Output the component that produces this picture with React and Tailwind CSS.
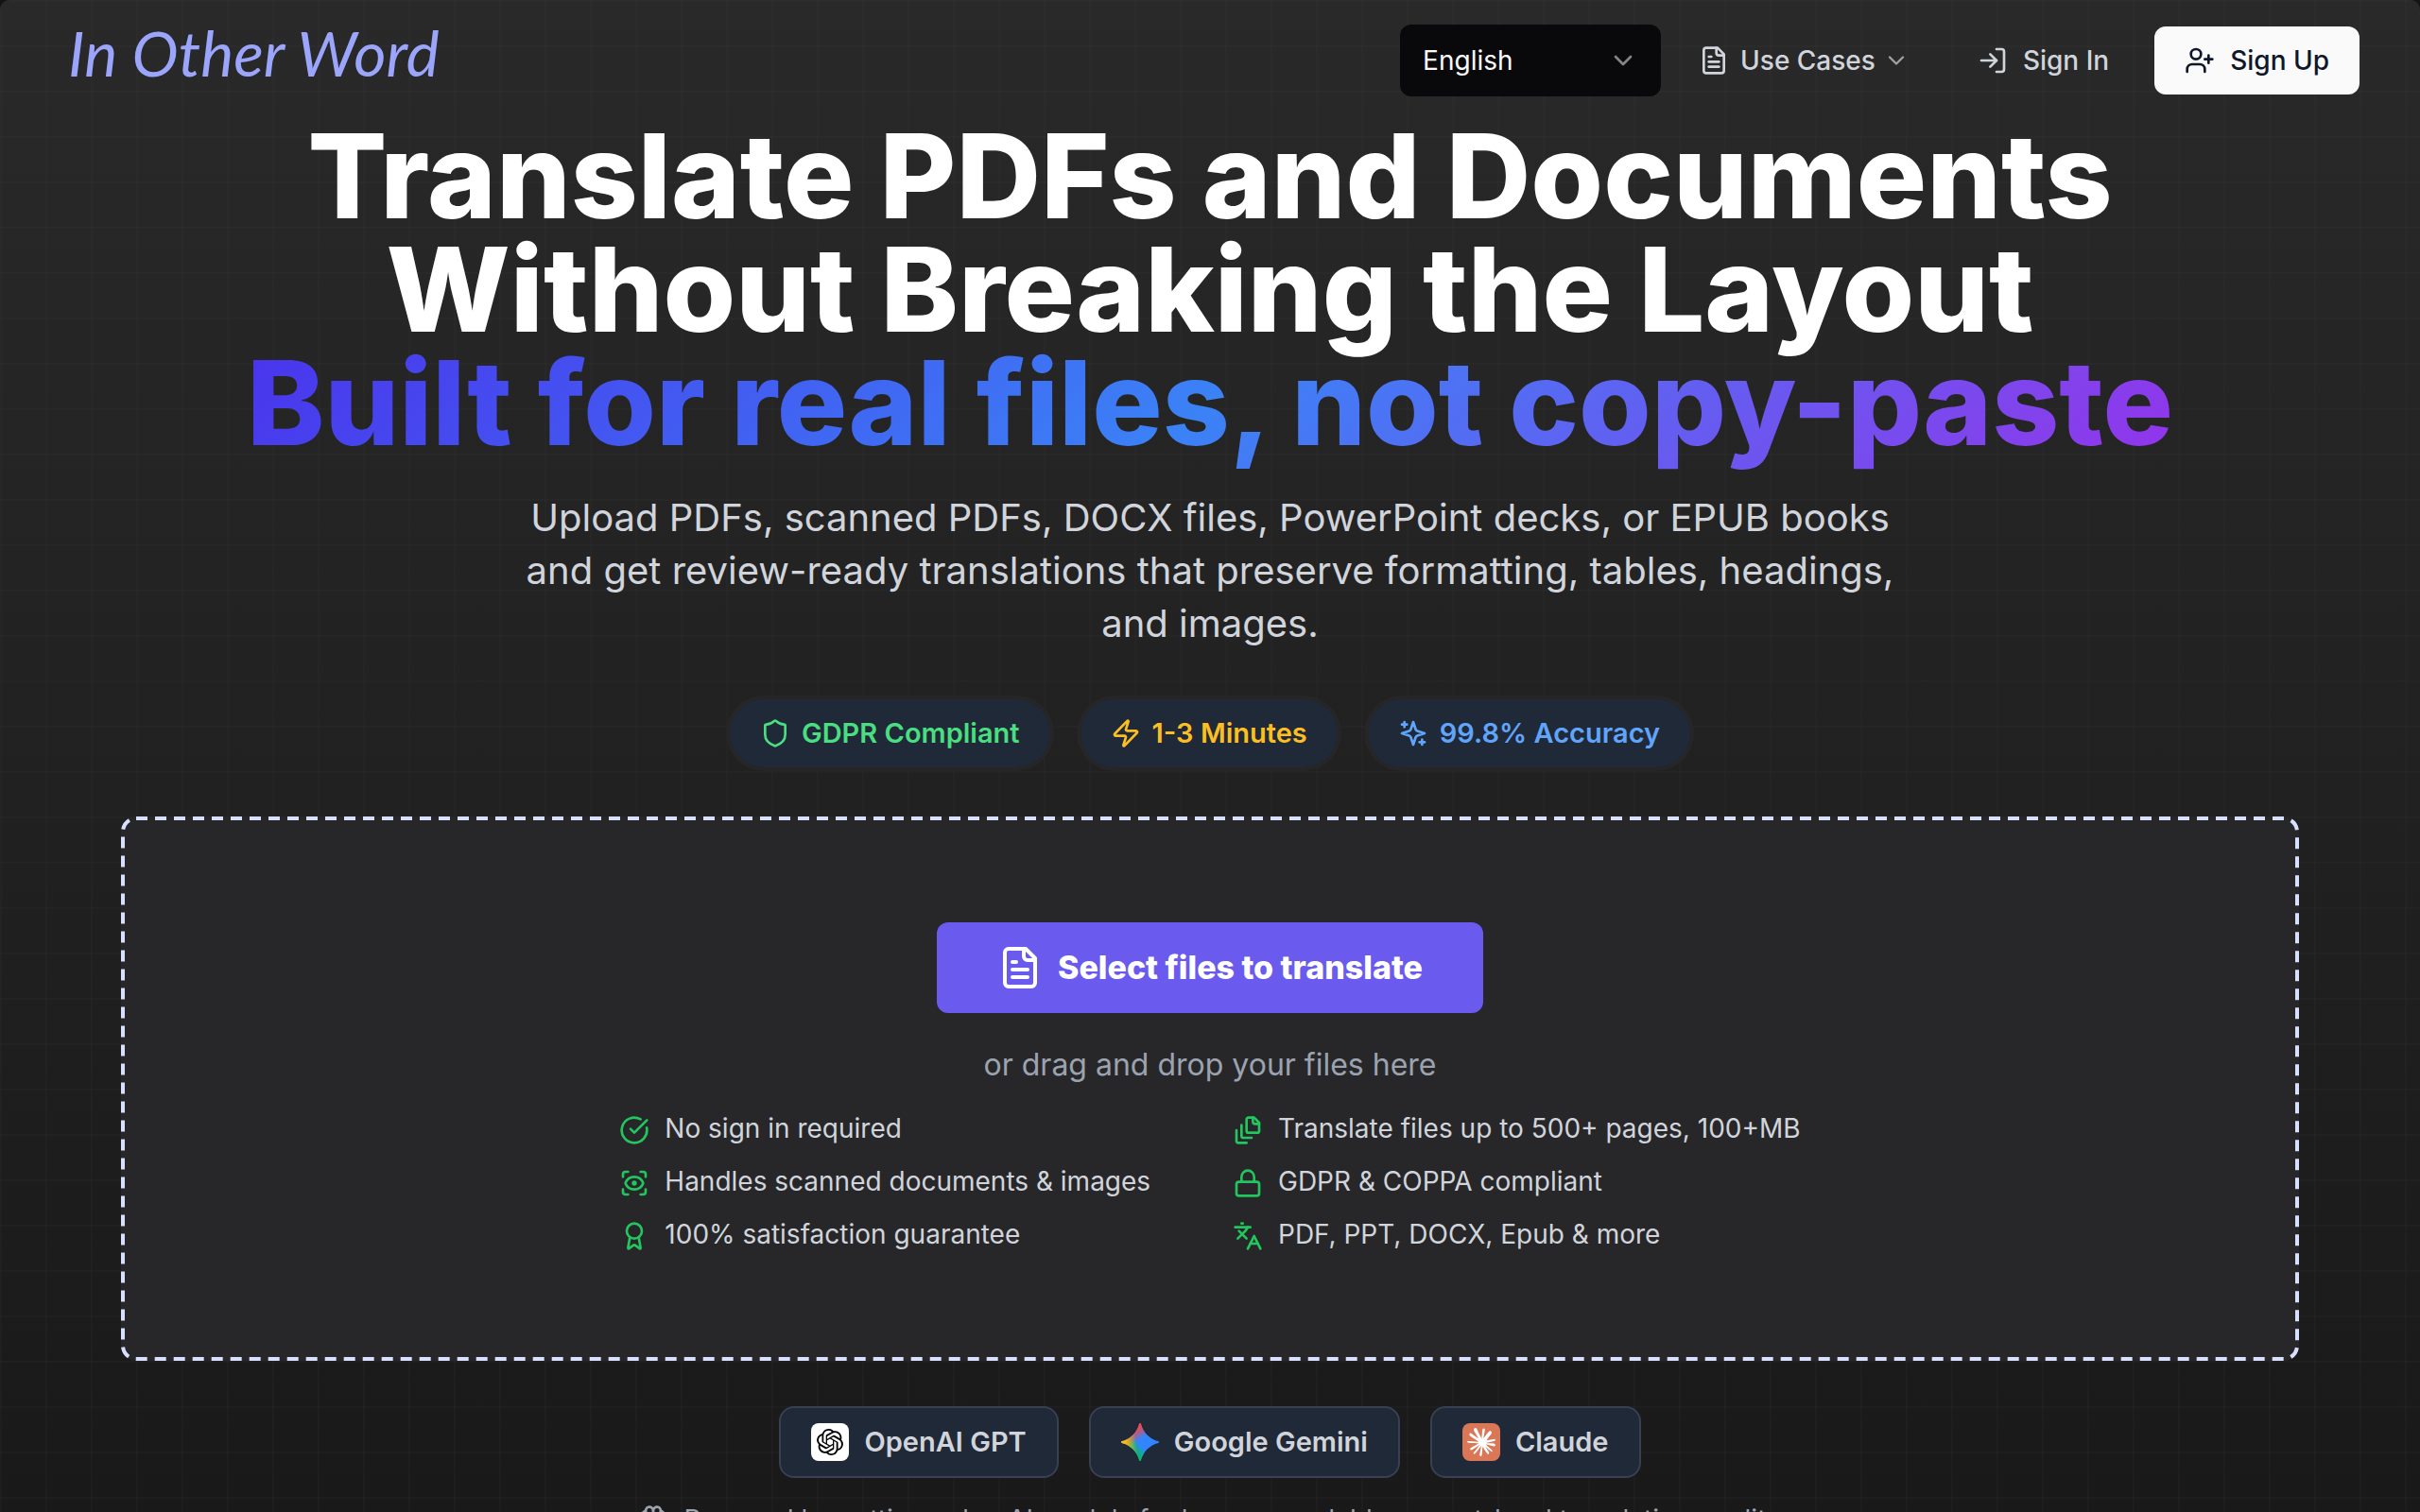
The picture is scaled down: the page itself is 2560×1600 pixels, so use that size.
import { useState } from 'react';
import {
  Award,
  Brain,
  ChevronDown,
  CircleCheckBig,
  Languages,
  Lock,
  LogIn,
  ScanEye,
  Shield,
  UserPlus,
  Zap,
} from 'lucide-react';
import { SiClaude, SiOpenai } from 'react-icons/si';

function StrokeIcon({ className, children }) {
  return (
    <svg
      className={className}
      viewBox="0 0 24 24"
      fill="none"
      stroke="currentColor"
      strokeWidth="2"
      strokeLinecap="round"
      strokeLinejoin="round"
      aria-hidden="true"
    >
      {children}
    </svg>
  );
}

function SparklesIcon({ className }) {
  return (
    <StrokeIcon className={className}>
      <path d="m12 3-1.912 5.813a2 2 0 0 1-1.275 1.275L3 12l5.813 1.912a2 2 0 0 1 1.275 1.275L12 21l1.912-5.813a2 2 0 0 1 1.275-1.275L21 12l-5.813-1.912a2 2 0 0 1-1.275-1.275L12 3Z" />
      <path d="M5 3v4" />
      <path d="M19 17v4" />
      <path d="M3 5h4" />
      <path d="M17 19h4" />
    </StrokeIcon>
  );
}

function DocumentIcon({ className }) {
  return (
    <StrokeIcon className={className}>
      <path d="M15 2H6a2 2 0 0 0-2 2v16a2 2 0 0 0 2 2h12a2 2 0 0 0 2-2V7Z" />
      <path d="M14 2v4a2 2 0 0 0 2 2h4" />
      <path d="M10 9H8" />
      <path d="M16 13H8" />
      <path d="M16 17H8" />
    </StrokeIcon>
  );
}

function PagesIcon({ className }) {
  return (
    <StrokeIcon className={className}>
      <path d="M21 7h-3a2 2 0 0 1-2-2V2" />
      <path d="M21 6v6.5c0 .8-.7 1.5-1.5 1.5h-7c-.8 0-1.5-.7-1.5-1.5v-9c0-.8.7-1.5 1.5-1.5H17Z" />
      <path d="M7 8v8.8c0 .3.2.6.4.8.2.2.5.4.8.4H15" />
      <path d="M3 12v8.8c0 .3.2.6.4.8.2.2.5.4.8.4H11" />
    </StrokeIcon>
  );
}

const GEMINI_STAR =
  'M20.616 10.835a14.147 14.147 0 01-4.45-3.001 14.111 14.111 0 01-3.678-6.452.503.503 0 00-.975 0 14.134 14.134 0 01-3.679 6.452 14.155 14.155 0 01-4.45 3.001c-.65.28-1.318.505-2.002.678a.502.502 0 000 .975c.684.172 1.35.397 2.002.677a14.147 14.147 0 014.45 3.001 14.112 14.112 0 013.679 6.453.502.502 0 00.975 0c.172-.685.397-1.351.677-2.003a14.145 14.145 0 013.001-4.45 14.113 14.113 0 016.453-3.678.503.503 0 000-.975 13.245 13.245 0 01-2.003-.678z';

function GeminiLogo() {
  return (
    <svg className="size-10" viewBox="1 1 22 22" aria-hidden="true">
      <defs>
        <linearGradient id="gemini-green" gradientUnits="userSpaceOnUse" x1="7" x2="11" y1="15.5" y2="12">
          <stop stopColor="#08B962" />
          <stop offset="1" stopColor="#08B962" stopOpacity="0" />
        </linearGradient>
        <linearGradient id="gemini-red" gradientUnits="userSpaceOnUse" x1="8" x2="11.5" y1="5.5" y2="11">
          <stop stopColor="#F94543" />
          <stop offset="1" stopColor="#F94543" stopOpacity="0" />
        </linearGradient>
        <linearGradient id="gemini-yellow" gradientUnits="userSpaceOnUse" x1="3.5" x2="17.5" y1="13.5" y2="12">
          <stop stopColor="#FABC12" />
          <stop offset=".46" stopColor="#FABC12" stopOpacity="0" />
        </linearGradient>
      </defs>
      <path d={GEMINI_STAR} fill="#3186FF" />
      <path d={GEMINI_STAR} fill="url(#gemini-green)" />
      <path d={GEMINI_STAR} fill="url(#gemini-red)" />
      <path d={GEMINI_STAR} fill="url(#gemini-yellow)" />
    </svg>
  );
}

function OpenAILogo() {
  return (
    <span className="flex size-10 items-center justify-center rounded-lg bg-white text-black">
      <SiOpenai className="size-7" />
    </span>
  );
}

function ClaudeLogo() {
  return (
    <span className="flex size-10 items-center justify-center rounded-lg bg-[#d97757] text-white">
      <SiClaude className="size-[30px]" />
    </span>
  );
}

const badges = [
  { label: 'GDPR Compliant', icon: Shield, color: 'text-[#4ade80]' },
  { label: '1-3 Minutes', icon: Zap, color: 'text-[#fbbf24]' },
  { label: '99.8% Accuracy', icon: SparklesIcon, color: 'text-[#60a5fa]' },
];

const features = [
  { label: 'No sign in required', icon: CircleCheckBig },
  { label: 'Translate files up to 500+ pages, 100+MB', icon: PagesIcon },
  { label: 'Handles scanned documents & images', icon: ScanEye },
  { label: 'GDPR & COPPA compliant', icon: Lock },
  { label: '100% satisfaction guarantee', icon: Award },
  { label: 'PDF, PPT, DOCX, Epub & more', icon: Languages },
];

const models = [
  { label: 'OpenAI GPT', logo: OpenAILogo },
  { label: 'Google Gemini', logo: GeminiLogo },
  { label: 'Claude', logo: ClaudeLogo },
];

function Header() {
  const [language, setLanguage] = useState('en');

  return (
    <header className="flex items-start justify-between px-16 pt-[26px] pb-6">
      <a href="#" className="pl-2 font-['Lato'] text-[66px] leading-[60px] text-[#9aa5fb] italic">
        In Other Word
      </a>

      <nav className="flex items-center gap-4 text-[28px] leading-10 font-medium text-[#d1d5db]">
        <div className="relative">
          <select
            aria-label="Language"
            value={language}
            onChange={(e) => setLanguage(e.target.value)}
            className="h-[76px] w-[276px] appearance-none rounded-xl bg-[#09090b] px-6 font-normal text-[#fafafa]"
          >
            <option value="en">English</option>
            <option value="es">Español</option>
            <option value="fr">Français</option>
          </select>
          <ChevronDown className="pointer-events-none absolute top-[22px] right-6 size-8 text-white opacity-50" />
        </div>

        <button type="button" className="flex h-[72px] items-center gap-3 px-6">
          <DocumentIcon className="size-8" />
          <span>Use Cases</span>
          <ChevronDown className="-ml-1 size-7 opacity-70" />
        </button>

        <a href="#" className="flex h-[72px] items-center gap-4 px-8">
          <LogIn className="size-8" />
          Sign In
        </a>

        <a href="#" className="flex h-[72px] items-center gap-4 rounded-xl bg-[#fafafa] px-8 text-[#0f172a]">
          <UserPlus className="size-8" />
          Sign Up
        </a>
      </nav>
    </header>
  );
}

function DropZone() {
  return (
    <section className="relative mt-12 flex w-full flex-col items-center rounded-2xl bg-[#27272a] pt-28 pb-[114px]">
      <svg className="pointer-events-none absolute inset-0 h-full w-full" fill="none" aria-hidden="true">
        <rect
          x="2"
          y="2"
          rx="14"
          className="h-[calc(100%-4px)] w-[calc(100%-4px)]"
          stroke="#d9dffe"
          strokeWidth="4"
          strokeDasharray="12 8"
        />
      </svg>

      <button
        type="button"
        className="flex h-24 items-center gap-4 rounded-xl bg-[#6a5aed] px-16 text-[34px] leading-10 font-extrabold text-white"
      >
        <DocumentIcon className="size-12" />
        Select files to translate
      </button>

      <p className="mt-8 text-[32px] leading-[46px] text-[#9ca3af]">or drag and drop your files here</p>

      <ul className="mt-6 grid grid-cols-2 gap-x-12 gap-y-4">
        {features.map(({ label, icon: Icon }) => (
          <li key={label} className="flex items-start gap-4 text-[28px] leading-10 text-[#d1d5db]">
            <Icon className="mt-1.5 size-8 shrink-0 text-[#22c55e]" />
            {label}
          </li>
        ))}
      </ul>
    </section>
  );
}

function App() {
  return (
    <div className="h-screen overflow-hidden bg-[#141414] font-['Inter',sans-serif]">
      <div className="min-h-screen rounded-t-[10px] bg-[linear-gradient(to_right,rgba(255,255,255,0.014)_2px,transparent_2px),linear-gradient(to_bottom,rgba(255,255,255,0.014)_2px,transparent_2px),linear-gradient(to_bottom,#292929,#191919)] bg-[size:48px_48px,48px_48px,100%_100%]">
        <Header />

        <main className="flex flex-col items-center px-32">
          <h1 className="text-center text-[124px] leading-[120px] font-extrabold text-white">
            Translate PDFs and Documents
            <br />
            Without Breaking the Layout
            <br />
            <span className="bg-[linear-gradient(135deg,#4a33ec,#3b82f6,#9333ea)] bg-clip-text text-transparent">
              Built for real files, not copy-paste
            </span>
          </h1>

          <p className="mt-[34px] max-w-[1480px] text-center text-[40px] leading-14 text-[#d1d5db]">
            Upload PDFs, scanned PDFs, DOCX files, PowerPoint decks, or EPUB books and get review-ready
            translations that preserve formatting, tables, headings, and images.
          </p>

          <div className="mt-12 flex gap-6">
            {badges.map(({ label, icon: Icon, color }) => (
              <div key={label} className="rounded-full bg-[#262626] p-1">
                <div
                  className={`flex h-[72px] items-center gap-3 rounded-full bg-[#1f2937] px-8 text-[29px] leading-10 font-semibold ${color}`}
                >
                  <Icon className="size-8" />
                  {label}
                </div>
              </div>
            ))}
          </div>

          <DropZone />

          <div className="mt-12 flex gap-8">
            {models.map(({ label, logo: Logo }) => (
              <div
                key={label}
                className="flex h-[76px] items-center gap-4 rounded-2xl border-2 border-[#374151] bg-[#1f2937] px-8 text-[29px] leading-10 font-semibold text-[#d1d5db]"
              >
                <Logo />
                {label}
              </div>
            ))}
          </div>

          <p className="mt-6 flex items-center gap-4 text-[28px] leading-10 text-[#9ca3af]">
            <Brain className="size-8" />
            Powered by cutting-edge AI models for human-readable, expert-level translation quality
          </p>
        </main>
      </div>
    </div>
  );
}

export default App;
